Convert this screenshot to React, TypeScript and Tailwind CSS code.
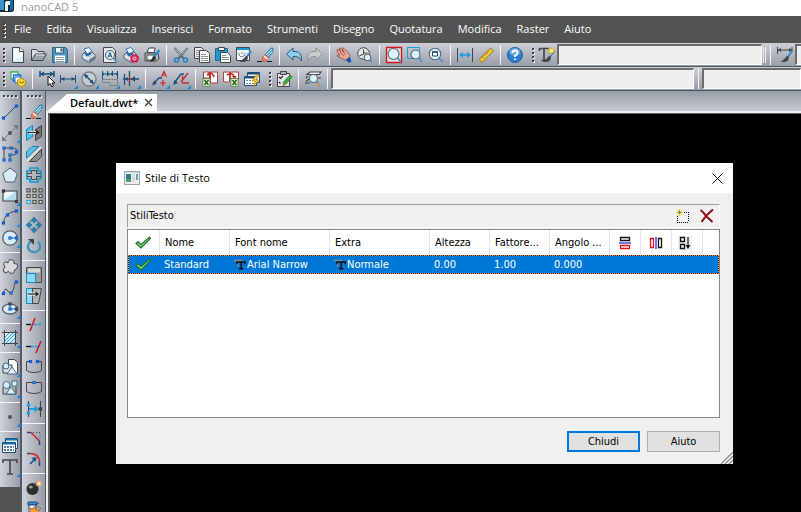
import { Fragment, type ReactNode } from "react";
import clsx from "clsx";

const INK = "#454545";
const NAVY = "#1d4f7c";
const CYAN = "#1a9fdc";
const RED = "#c8262c";

/* small shapes shared by several icons */
const Node = ({ x, y, c = "#0a5bd0" }: { x: number; y: number; c?: string }) => (
  <rect x={x - 1} y={y - 1} width="2" height="2" fill="#fff" stroke={c} strokeWidth="1.2" />
);

const Lens = ({ x = 7, y = 7, r = 4.5 }: { x?: number; y?: number; r?: number }) => (
  <>
    <path d={`M${x + r * 0.7} ${y + r * 0.7}L15 15`} stroke="#5b93c4" strokeWidth="2" />
    <circle cx={x} cy={y} r={r} fill="#d9f1fa" stroke="#5a656c" strokeWidth="1.1" />
  </>
);

const Brush = () => (
  <>
    <path d="M15 4L10 10" stroke="#1c78c4" strokeWidth="2.4" />
    <path d="M14 4.5L10 9" stroke="#d9edf8" strokeWidth=".8" />
    <path d="M10.500 9L7 12Q6 14 3.500 14.500Q8 16 11 13.500L12 10.500z" fill={INK} />
  </>
);

const Printer = () => (
  <>
    <path d="M3 2l5-1.500 3 4-5 2.500z" fill="#f4faff" stroke="#2a78c6" />
    <path d="M1 8l3-3 2 2.500 5-2.500 3 3v4l-6 3.500-7-4z" fill="#c9d0dc" stroke="#56647d" />
    <path d="M2 9l6 3 5.500-3.500" fill="none" stroke="#fff" />
    <path d="M8 12.500v3l6-3.500V8.500z" fill="#6a7a98" />
    <path d="M4 6l2 2.500 4-2" fill="none" stroke="#1b62b5" strokeWidth="1.500" />
  </>
);

const Dims = ({ y }: { y: number }) => (
  <>
    <path d={`M.5 ${y - 4}v8M15.500 ${y - 4}v8M1 ${y}h14`} stroke={NAVY} />
    <path d={`M1 ${y}l3.500-2v4zM15 ${y}l-3.500-2v4z`} fill={NAVY} />
  </>
);

const Excel = ({ x, y }: { x: number; y: number }) => (
  <>
    <rect x={x} y={y} width="7" height="8" fill="#e4f0dc" stroke="#4a7a34" strokeWidth=".7" />
    <path d={`M${x + 1.5} ${y + 1.5}l4 5M${x + 5.5} ${y + 1.5}l-4 5`} stroke="#2b6b10" strokeWidth="1.600" />
  </>
);

const Eraser = () => (
  <>
    <path d="M0 14.500h5M10 14.500h5" stroke="#111" strokeWidth="1.200" />
    <path d="M8 8l6-7h2v4l-5 6z" fill="#4aa9dc" stroke="#256e9c" strokeWidth=".7" />
    <path d="M9 8l6-6M10.500 9.500l5-5" stroke="#d6effa" strokeWidth=".9" />
    <path d="M5 11l3-3.500 3.500 3-3 4H6z" fill="#ee7c55" stroke="#a84a30" strokeWidth=".6" />
    <path d="M7 9l3.500 3" stroke="#fff" strokeWidth="1.200" />
  </>
);

const icons: Record<string, ReactNode> = {
  new: (
    <>
      <path d="M2.500.5h7.500l3.500 3.500v11.500h-11z" fill="#d9eefa" stroke={INK} />
      <path d="M4 2h5v4h4v3L4 13z" fill="#fff" opacity=".7" />
      <path d="M9.500.5v4h4" fill="#fff" stroke={INK} />
    </>
  ),
  open: (
    <>
      <path d="M.5 13.500v-11h5l1.500 2h6v3" fill="#d3dbe2" stroke={INK} />
      <path d="M.5 13.500l4-6.500h11l-3.500 6.500z" fill="#9ba4ae" stroke={INK} />
      <path d="M5 8h9" stroke="#e4e9ed" />
    </>
  ),
  save: (
    <>
      <path d="M.5.5h13l2 2v13h-15z" fill="#4d94b8" stroke="#2e6684" />
      <path d="M3.500.5h8v5.500h-8z" fill="#edf5f9" stroke="#2e6684" />
      <path d="M8.500 1.500h2v3h-2z" fill="#41545f" />
      <path d="M3 8.500h10v7H3z" fill="#fff" />
      <path d="M4 10.500h8M4 12.500h8M4 14.500h8" stroke="#8ba1ac" />
    </>
  ),
  print: <Printer />,
  preview: (
    <>
      <path d="M1.500.5h9l3 3v12h-12z" fill="#e6eaee" stroke={INK} />
      <Lens x={8} y={8} r={4.5} />
      <path d="M6 10.500L8 5.500l2 5M7 9h2" fill="none" stroke={NAVY} />
    </>
  ),
  printSetup: (
    <>
      <Printer />
      <circle cx="11.500" cy="11.500" r="3" fill="#f8c2d0" stroke="#cf204e" strokeWidth="1.800" />
      <circle cx="11.500" cy="11.500" r="4.300" fill="none" stroke="#cf204e" strokeDasharray="1.700 1.700" />
      <circle cx="11.500" cy="11.500" r="1" fill="#cf204e" />
    </>
  ),
  plotStyle: (
    <>
      <path d="M3 5l2-4h6l-1 5z" fill="#fff" stroke={INK} />
      <path d="M1 6h13l1 6-3 2H1z" fill="#b4bac2" stroke={INK} />
      <path d="M3 8h8v5H3z" fill="#f4f5f6" stroke={INK} />
      <path d="M15.500 3L9 11" stroke="#1f8bd1" strokeWidth="2.200" />
      <path d="M10 9l-3 4-1 2 3-1 3-3z" fill="#2a2a2a" />
    </>
  ),
  cut: (
    <>
      <path d="M1.500 1L11 12M14.500 1L5 12" stroke="#5c6872" strokeWidth="2" />
      <path d="M2 1.500l6 7M14 1.500L9 7" stroke="#e2edf3" strokeWidth=".7" />
      <circle cx="3.500" cy="13" r="2" fill="none" stroke="#2586bd" strokeWidth="1.600" />
      <circle cx="12.500" cy="13" r="2" fill="none" stroke="#2586bd" strokeWidth="1.600" />
    </>
  ),
  copy: (
    <>
      <path d="M.5.5h7l2 2v9h-9z" fill="#e8ecef" stroke={INK} />
      <path d="M2 3.500h5M2 5.500h4M2 7.500h3M2 9.500h3" stroke="#8a949c" />
      <path d="M5.500 3.500h7l3 3v9h-10z" fill="#fff" stroke={INK} />
      <path d="M7 7.500h5M7 9.500h7M7 11.500h7M7 13.500h7" stroke="#8a949c" />
    </>
  ),
  paste: (
    <>
      <path d="M.5 1.500h12v12H.5z" fill="#1c9ad4" stroke="#226c94" />
      <path d="M3.500.5h6v3h-6z" fill="#eef2f5" stroke={INK} />
      <path d="M5.500 5.500h7l3 3v7h-10z" fill="#fff" stroke={INK} />
      <path d="M7 8.500h4M7 10.500h7M7 12.500h7" stroke="#8a949c" />
    </>
  ),
  match: (
    <>
      <path d="M.5.500h13v13H.5z" fill="#f3f6f8" stroke={INK} />
      <path d="M1 2h12" stroke="#1c9ad4" strokeWidth="2" />
      <path d="M3 6v2l2 2 3-1 1-3M6 5v2" fill="none" stroke="#7b858d" />
      <Brush />
    </>
  ),
  eraser: <Eraser />,
  undo: (
    <path d="M.5 7L7 1v3.500h3Q16 5 15.500 14 13 9 9 9.500H7v3.500z" fill="#8dcdec" stroke="#285d7d" />
  ),
  redo: (
    <path d="M15.500 7L9 1v3.500H6Q0 5 .5 14 3 9 7 9.500h2v3.500z" fill="#c9ccd0" stroke="#8f9398" />
  ),
  hand: (
    <>
      <path
        d="M1 3q1-1 2 0l2 2-2-3q1-2 2-.5l3 3-2-3q1-1.500 2 0l4 4 2 3-1 4-3 1-4-2-5-2.500q0-1.500 2-1.200l1 .2-3-3.500z"
        fill="#e6a995"
        stroke="#8d4434"
        strokeWidth=".8"
      />
      <path d="M4 5l4 4M6 4l4 4" stroke="#8d4434" strokeWidth=".7" />
      <path d="M10 12l4-2 1.500 4.500-3 1.500z" fill="#1d4fb3" />
    </>
  ),
  zoomTime: (
    <>
      <circle cx="6.500" cy="6.500" r="5.800" fill="#dfe5e9" stroke={INK} />
      <path d="M6.500 2.500v5l-4 1M6.500 6h4" fill="none" stroke={INK} />
      <Lens x={10.5} y={10.5} r={3.3} />
    </>
  ),
  zoomAll: (
    <>
      <path d="M.5.5h15v15H.5z" fill="#dfe0e4" stroke="#d3131b" strokeWidth="1.300" />
      <Lens x={7.5} y={7} r={5.5} />
    </>
  ),
  zoomWindow: (
    <>
      <path d="M.5.5h12v11H.5z" fill="none" stroke={CYAN} />
      <Lens x={8.5} y={7.5} r={4.5} />
    </>
  ),
  zoomFit: (
    <>
      <Lens x={7} y={7} r={5.8} />
      <path d="M4.500 5h5v4h-5z" fill="#fff" stroke={NAVY} />
      <path d="M4 5h6" stroke={NAVY} strokeWidth="1.500" />
    </>
  ),
  distance: (
    <>
      <path d="M.5 1v14M15.500 1v14" stroke={INK} />
      <path d="M3 8h10" stroke={CYAN} strokeWidth="1.500" />
      <path d="M2 8l4-3v6zM14 8l-4-3v6z" fill={CYAN} />
    </>
  ),
  ruler: (
    <>
      <path d="M1 12.500L12.500 1l3 3L4 15.500z" fill="#f3c63b" stroke="#9a7414" />
      <path d="M4 9.500l1.500 1.500M6 7.500L7 8.500M8 5.500l1.500 1.500M10 3.500l1 1" stroke="#6b500b" />
    </>
  ),
  help: (
    <>
      <circle cx="8" cy="8" r="7.500" fill="#2a7fd4" stroke="#215c9c" />
      <ellipse cx="8" cy="5" rx="5.500" ry="4" fill="#84bdf0" opacity=".7" />
      <path d="M5.500 6q0-2.500 2.500-2.500T10.500 6Q10.500 7.500 8 8.500v1.500M8 11.500v1.600" fill="none" stroke="#fff" strokeWidth="1.800" />
    </>
  ),
  textStyle: (
    <>
      <path d="M0 1.500h10M.5 1v3M5 1.500V14M2.500 13.500H7" fill="none" stroke={INK} strokeWidth="1.700" />
      <Brush />
      <path d="M12.500 0v8M8.500 4h8M9.500 1l6 6M15.500 1l-6 6" stroke="#f39a1c" />
      <circle cx="12.500" cy="4" r="2" fill="#fff04a" />
    </>
  ),
  dimStyle: (
    <>
      <path d="M.5 0v7M15 0v5M1 3h14" stroke={INK} />
      <path d="M1 3l3-2v4zM15 3l-3-2v4z" fill={INK} />
      <Brush />
    </>
  ),
  layers: (
    <>
      <path d="M1 1h7v7H1z" fill="#fff" stroke="#3bb44a" strokeWidth="1.300" />
      <path d="M3.500 4h7v6h-7z" fill="#eef4ff" stroke="#1d66d6" strokeWidth="1.300" />
      <path d="M5 6h6v6H5z" fill="#fff" stroke="#1d66d6" />
      <path d="M7 10l4-3 5 3-1 4-4 2-3-2z" fill="#f7d637" stroke="#b78d14" />
      <path d="M9 11l3 1 2-1.500" fill="none" stroke="#8a6b10" />
    </>
  ),
  dimPick: (
    <>
      <path d="M1 0v6M15 0v6M1 3h14" stroke={NAVY} strokeWidth="1.500" />
      <path d="M1 3l4-2.500v5zM15 3l-4-2.500v5z" fill={NAVY} />
      <path d="M9 5v9.500l2.200-2 1.800 3.500 1.500-1-1.500-3h3z" fill="#fff" stroke="#111" />
    </>
  ),
  dimLinear: <Dims y={8} />,
  dimDiameter: (
    <>
      <circle cx="8" cy="8" r="7" fill="#c8ccd2" stroke="#7b7f84" strokeWidth="1.300" />
      <path d="M4 4l8 8" stroke={NAVY} strokeWidth="1.500" />
      <path d="M3 3l4.500 1.500L4.500 7.500zM13 13l-4.500-1.500 3-3z" fill={NAVY} />
    </>
  ),
  dimBase: (
    <>
      <path d="M.5 0v8M5.500 0v5M10.500 0v5M15.500 0v8M1 3h14" stroke={NAVY} />
      <path d="M0 3l2-1.500v3zM5 3l2-1.500v3zM11 3L9 1.500v3zM16 3l-2-1.500v3z" fill={NAVY} />
      <path d="M.5 8.500h15v6H8v-3H.5z" fill="none" stroke="#6d7176" strokeDasharray="2 1" />
    </>
  ),
  dimBreak: (
    <>
      <path d="M1.500 3v11M6.500 0v5M6.500 10v5M0 8h16" stroke={NAVY} strokeWidth="1.300" />
      <path d="M2 8l3-2v4zM8 8l4-3v6z" fill={NAVY} />
      <path d="M6.500 5v6" stroke={RED} strokeWidth="1.300" />
    </>
  ),
  leader: (
    <>
      <path d="M1 13l6-6h3" fill="none" stroke={NAVY} strokeWidth="1.400" />
      <path d="M0 14.500l2-5 3 3z" fill={NAVY} />
      <path d="M9.500 6L12 .5 14.500 6M10.500 4h3M8 12h6M11 9v6" fill="none" stroke={RED} strokeWidth="1.200" />
    </>
  ),
  leaderEdit: (
    <>
      <path d="M2 11l6-8h3" fill="none" stroke={NAVY} strokeWidth="1.400" />
      <path d="M0 14l1.500-5 3.500 3z" fill={NAVY} />
      <path d="M15 2L8 11M9.500 4.500v5M9 12h7" fill="none" stroke={RED} strokeWidth="1.300" />
    </>
  ),
  excelOut: (
    <>
      <path d="M1.500 1h6v6h-6zM8.500 1h7v11h-7z" fill="#fff" stroke="#b2423c" />
      <path d="M6 3q4-3 6 3" fill="none" stroke={RED} strokeWidth="1.600" />
      <path d="M4 4l4-3v4z" fill={RED} />
      <Excel x={1} y={7.5} />
    </>
  ),
  excelIn: (
    <>
      <path d="M.5 1h6v10h-6zM7.500 1h8v7h-8z" fill="#fff" stroke="#b2423c" />
      <path d="M4 4q5-3 7 1" fill="none" stroke={RED} strokeWidth="1.600" />
      <path d="M12 8L8.500 5h5z" fill={RED} />
      <Excel x={8} y={7.5} />
    </>
  ),
  tableFlash: (
    <>
      <path d="M3.500 1.500h12v10h-12z" fill="#eef5fa" stroke={NAVY} />
      <path d="M.5 5.500h12v9H.5z" fill="#fff" stroke={NAVY} />
      <path d="M1 6.500h11M4 2.500h11" stroke={NAVY} strokeWidth="1.800" />
      <path d="M2 9.500h9M2 12.500h9" stroke="#5b8cb0" strokeDasharray="2 1" />
      <path d="M12 4l-4 6h3l-2 6 6-7h-3l3-5z" fill="#ffc52e" stroke="#b9770b" strokeWidth=".6" />
    </>
  ),
  clipboard: (
    <>
      <path d="M1.500 2.500h12v13h-12z" fill="#e2e9ed" stroke={INK} />
      <path d="M4.500.5h6v3h-6z" fill="#aab2b8" stroke={INK} />
      <path d="M3 6l1.500 1.500L7 5M3 11l1.500 1.500" fill="none" stroke="#222" strokeWidth="1.200" />
      <path d="M14 4l2 2-6 7-3 1.500.5-3.500z" fill="#3dab3b" stroke="#216e20" strokeWidth=".7" />
      <path d="M7 14.500l.5-3 2 2z" fill="#e8663d" />
    </>
  ),
  layerSearch: (
    <>
      <path d="M2 3.500L5 1h11l-2 2.500zM1 7l2-2M1 10.500l3-2.500M0 12h5M12 7h4" fill="#eef1f3" stroke={INK} strokeWidth="1.200" />
      <Lens x={8.5} y={7.5} r={4} />
      <path d="M12.500 12.500l2 2" stroke="#ee8c36" strokeWidth="2" />
    </>
  ),
  line: (
    <>
      <path d="M2 14L14 2" stroke={NAVY} />
      <Node x={1.5} y={14} />
      <Node x={14.5} y={2} />
    </>
  ),
  ray: (
    <>
      <path d="M1 15L15 1" stroke="#77797c" />
      <path d="M0 16v-5l5 5zM16 0v5l-5-5z" fill="#77797c" />
      <Node x={8} y={8} c="#333" />
    </>
  ),
  polyline: (
    <>
      <path d="M2 14V2h8q5 0 5 3.500T10 9H8v5" fill="none" stroke={INK} />
      <Node x={2} y={2} />
      <Node x={9} y={2} />
      <Node x={2} y={14} />
      <Node x={8} y={14} />
      <Node x={8} y={9} />
      <Node x={14.5} y={6} />
    </>
  ),
  polygon: <path d="M8 1l7.300 5.500L12.500 15h-9L.7 6.500z" fill="#d5edf8" stroke="#53616b" />,
  rect: (
    <>
      <path d="M1 3h14v10H1z" fill="#b5def1" stroke={INK} strokeWidth="1.100" />
      <path d="M2 12V4h11z" fill="#eef9fd" />
      <Node x={1.5} y={3} c="#333" />
      <Node x={14.5} y={13.5} c="#333" />
    </>
  ),
  arc: (
    <>
      <path d="M1.500 14Q2 4 14 2" fill="none" stroke={INK} />
      <Node x={1.5} y={14} />
      <Node x={5.5} y={6} />
      <Node x={14.5} y={2} />
    </>
  ),
  circle: (
    <>
      <circle cx="8" cy="8" r="7.200" fill="#d5edf8" stroke="#53616b" strokeWidth="1.300" />
      <path d="M8 8h7" stroke="#0a5bd0" />
      <Node x={8} y={8} />
      <Node x={14.5} y={8} />
    </>
  ),
  cloud: (
    <path
      d="M3 8Q0 4 3.500 3 5 3 6 4 6 0 10 .8q3 1 2 4 4-1 3.500 3-1 3-3 3 0 4-4 3.500-2-1-2-2Q4 15 2 13q-2-3 1-5z"
      fill="#d6d8dc"
      stroke={INK}
    />
  ),
  spline: (
    <>
      <path d="M1.500 13Q3 7 5 10t4 3 3-6 2-5" fill="none" stroke={INK} />
      <Node x={1.5} y={13.5} />
      <Node x={9} y={13} />
      <Node x={14.5} y={2} />
    </>
  ),
  ellipse: (
    <>
      <ellipse cx="8" cy="8" rx="7.500" ry="5" fill="#d5edf8" stroke="#53616b" strokeWidth="1.300" />
      <path d="M8 3v5h7" fill="none" stroke="#0a5bd0" />
      <Node x={8} y={3} c="#333" />
      <Node x={8} y={8} />
      <Node x={14.5} y={8} c="#333" />
    </>
  ),
  hatch: (
    <>
      <path d="M3 3h10v10H3z" fill="#d8effa" />
      <path d="M3 7l4-4M3 11l8-8M4 13l9-9M8 13l5-5M11.500 13l1.500-1.500" stroke={CYAN} />
      <path d="M2.500 0v16M13.500 0v16M0 2.500h16M0 13.500h16" stroke={INK} />
    </>
  ),
  blockFile: (
    <>
      <path d="M6.500.5h6l3 3v11h-9z" fill="#fff" stroke={INK} />
      <path d="M1 6h9v8H1z" fill="#d2e3ec" stroke={INK} />
      <circle cx="4" cy="7" r="3" fill="#d5edf8" stroke="#3a6d8b" />
      <path d="M5 15l5-7 5 7z" fill="#e9eef1" stroke="#3a6d8b" />
    </>
  ),
  block: (
    <>
      <path d="M1 7h7M1 7v7h13V7" fill="none" stroke={INK} />
      <circle cx="4.500" cy="5" r="3.500" fill="#d5edf8" stroke="#3a6d8b" />
      <path d="M10 1h5v5h-5z" fill="#e1eef4" stroke="#3a6d8b" />
      <path d="M4 14l5-7 5 7z" fill="#e9eef1" stroke="#3a6d8b" />
    </>
  ),
  point: <Node x={8} y={8} c="#333" />,
  tables: (
    <>
      <path d="M3.500.500h12v10h-12z" fill="#eef5fa" stroke={NAVY} />
      <path d="M.5 4.500h13v10H.5z" fill="#fff" stroke={NAVY} />
      <path d="M1 5.500h12M4 1.500h11" stroke="#1c6ca5" strokeWidth="2.200" />
      <path d="M2 9h10M2 12h10" stroke={NAVY} strokeWidth="1.500" strokeDasharray="2 1" />
    </>
  ),
  text: <path d="M1 4V1h14v3M8 1v14M5 15h6" fill="none" stroke={INK} strokeWidth="1.600" />,
  mirror: (
    <>
      <path d="M.5 4.500l6-4v11l-6 4z" fill="#4cc1ee" stroke="#1c83b1" />
      <path d="M9.500 4.500l6-4v11l-6 4z" fill="#777" stroke="#444" />
      <path d="M3 7.500h9" stroke="#fff" strokeWidth="3" />
      <path d="M2 7.500h9" stroke="#222" strokeWidth="1.300" />
      <path d="M14 7.500L10 5v5z" fill="#222" />
    </>
  ),
  offset: (
    <>
      <path d="M.5 12V6l5.500-5.500h6.500z" fill="#59c4ee" stroke="#1c83b1" />
      <path d="M3.500 15.500l12-12v7l-5 5z" fill="#8b8d90" stroke="#444" />
      <path d="M1 15L15 1" stroke="#eee" strokeWidth="1.500" />
    </>
  ),
  contour: (
    <>
      <path d="M1 4h3V1h8v3h3v8h-3v3H4v-3H1z" fill="none" stroke="#159bd2" strokeWidth="1.700" />
      <path d="M1 6.500h4.500v-3h5v3H15M1 9.500h4.500v3h5v-3H15" fill="none" stroke="#454545" />
    </>
  ),
  array: (
    <>
      <path d="M1 .8h3v3H1zM7 .8h3v3H7zM13 .8h3v3h-3zM1 6.500h3v3H1zM7 6.500h3v3H7zM13 6.500h3v3h-3zM7 12.500h3v3H7zM13 12.500h3v3h-3z" fill="#e2e2e2" stroke="#4c4c4c" strokeWidth="1.200" />
      <path d="M1 12.500h3v3H1z" fill="#eafaff" stroke={CYAN} strokeWidth="1.200" />
    </>
  ),
  move: (
    <>
      <path d="M8 0l3.500 4h-7zM8 16l3.500-4h-7zM0 8l4-3.500v7zM16 8l-4-3.500v7z" fill="#2b84af" stroke="#225e7c" strokeWidth=".5" />
      <path d="M8 4v2M8 10v2M4 8h2M10 8h2" stroke="#2b84af" strokeWidth="2.500" />
    </>
  ),
  rotate: (
    <>
      <path d="M4.500 3.500Q0 8 3.500 12.500 8 16 12.500 12.500 16 8 12 3.500" fill="none" stroke="#3d92bb" strokeWidth="2.200" />
      <path d="M2 1h6v6z" fill="#3b3f43" />
    </>
  ),
  scale: (
    <>
      <path d="M.5.5h15v15H.5z" fill="#9a9da0" stroke="#474747" />
      <path d="M2 1.500h12v4H2z" fill="#d6d7d9" />
      <path d="M.5 6.500h9v9h-9z" fill="#8bd9f7" stroke="#168bc0" />
    </>
  ),
  stretch: (
    <>
      <path d="M.5.500h9v15h-9z" fill="#8fdaf6" stroke="#168bc0" />
      <path d="M6.500.5h9l-3 15h-6z" fill="#afb2b5" stroke="#474747" />
      <path d="M2 6h9" stroke="#fff" strokeWidth="3" />
      <path d="M2 6h9" stroke="#222" strokeWidth="1.300" />
      <path d="M13 6L9.500 3.500v5z" fill="#222" />
    </>
  ),
  trim: (
    <>
      <path d="M0 7.500h5" stroke="#111" strokeWidth="1.300" />
      <path d="M8 7.500h8" stroke={CYAN} strokeWidth="1.300" strokeDasharray="3 1" />
      <path d="M4 14L9 1" stroke="#d4131b" strokeWidth="1.500" />
    </>
  ),
  extend: (
    <>
      <path d="M0 8.500h5" stroke="#111" strokeWidth="1.300" />
      <path d="M5 8.500h7" stroke={CYAN} strokeWidth="1.300" strokeDasharray="3 1" />
      <path d="M10 15l5-12" stroke="#d4131b" strokeWidth="1.500" />
    </>
  ),
  breakTwo: (
    <>
      <path d="M4 2.500H.5v9Q3 13.500 8 13.500t7.500-2v-9H12" fill="none" stroke={INK} />
      <Node x={4.5} y={2.5} />
      <Node x={11.5} y={2.5} />
    </>
  ),
  breakOne: (
    <>
      <path d="M7 2.500H.5v9Q3 13.500 8 13.500t7.500-2v-9H9" fill="none" stroke={INK} />
      <Node x={8} y={2.5} />
    </>
  ),
  lengthen: (
    <>
      <path d="M2.500 0v16M14.500 0v16" stroke={INK} />
      <path d="M3 8h7" stroke={CYAN} strokeWidth="2" />
      <path d="M13 8L8.500 4.500v7z" fill={CYAN} />
      <Node x={2.5} y={4} c={CYAN} />
      <Node x={2.5} y={12} c={CYAN} />
      <Node x={14.5} y={8} c="#333" />
    </>
  ),
  chamfer: (
    <>
      <path d="M1 2.500h4M13.500 11v4" stroke="#174f81" strokeWidth="1.500" />
      <path d="M5 2.500l8.500 8.500" stroke={RED} strokeWidth="1.500" />
      <path d="M7 2.500h7v7" fill="none" stroke="#174f81" strokeDasharray="1 2" />
    </>
  ),
  fillet: (
    <>
      <path d="M1 2.500h3M13.500 11v4M4 13l5-5" stroke="#174f81" strokeWidth="1.500" />
      <path d="M4 2.500q9 0 9.500 8.500" fill="none" stroke={RED} strokeWidth="1.600" />
      <path d="M10.500 6l-1 5-4-4z" fill="#174f81" />
    </>
  ),
  bomb: (
    <>
      <circle cx="6.500" cy="9" r="6" fill="#2e2e2e" />
      <ellipse cx="4.800" cy="7" rx="2" ry="1.500" fill="#999" />
      <path d="M9 3.500l2.500 2" stroke="#555" strokeWidth="2.500" />
      <path d="M10 4l2-2" stroke="#222" />
      <circle cx="13" cy="3.500" r="3" fill="#f2a07e" />
      <circle cx="13" cy="3.500" r="1.500" fill="#fff3a2" />
    </>
  ),
  purge: (
    <>
      <path d="M2 1h9v3H2z" fill="#3c8fcf" stroke={NAVY} />
      <path d="M3 4h7v10H3z" fill="#eef4f8" stroke={NAVY} />
      <path d="M5 9l8-7M12 5l3 3" stroke="#444" strokeDasharray="2 1" />
      <path d="M4 7l3 1 2-2 1 3 4 0-3 3 3 3-4 0-2 1-3-1z" fill="#f5a52a" stroke="#d0461c" strokeWidth=".7" />
    </>
  ),
  check: <path d="M1 8.500l2-2L6 9.500 14.500 2l1 1.500L6 13z" fill="#7ce07c" stroke="#1f6b31" strokeWidth="1.100" />,
  addStyle: (
    <>
      <path d="M2 14.500h12M13.500 4v10M2.500 8v6M9 4.500h5" fill="none" stroke="#111" strokeDasharray="1 1" />
      <path d="M4.500 1v7M1 4.500h7M2 2l5 5M7 2L2 7" stroke="#d9cf2a" />
      <path d="M4.500 2.500v3M3 4.500h3" stroke="#777" />
    </>
  ),
  remove: <path d="M1.500 2q3 2 5.500 6l6.500 6M14 1.500Q8 6 2.500 14" fill="none" stroke="#8c0d10" strokeWidth="2" />,
  flipV: (
    <>
      <path d="M3.500 2.500h9v3h-9z" fill="none" stroke="#111" strokeWidth="1.300" />
      <path d="M2 8h12" stroke="#1717e0" strokeWidth="1.200" />
      <path d="M3.500 10.500h9v3h-9z" fill="none" stroke="#e81212" strokeWidth="1.300" />
    </>
  ),
  flipH: (
    <>
      <path d="M2.500 3.500h3v9h-3z" fill="none" stroke="#e81212" strokeWidth="1.300" />
      <path d="M8 2v12" stroke="#1717e0" strokeWidth="1.200" />
      <path d="M10.500 3.500h3v9h-3z" fill="none" stroke="#111" strokeWidth="1.300" />
    </>
  ),
  vertical: (
    <>
      <path d="M1 1h14v14H1z" fill="#f0f0f0" />
      <path d="M3.500 2.500h4v4h-4zM3.500 9.500h4v4h-4z" fill="none" stroke="#111" strokeWidth="1.300" />
      <path d="M11 2v11" stroke="#111" strokeWidth="1.200" />
      <path d="M8.500 10h5L11 14z" fill="#111" />
    </>
  ),
  font: (
    <>
      <path d="M0 2h11M5 2v8" fill="none" stroke="#8b8b8b" strokeWidth="2" />
      <path d="M4 7V4h11v3M9.500 4v9M6.500 13h6" fill="none" stroke="#111" strokeWidth="2" />
    </>
  ),
};

const Icon = ({ name, className = "size-4" }: { name: string; className?: string }) => (
  <svg viewBox="0 0 16 16" className={clsx("shrink-0 overflow-visible", className)} aria-hidden="true">
    {icons[name]}
  </svg>
);

type Tool = [name: string, label: string, menu?: boolean];

const ToolButton = ({ tool: [name, label, menu] }: { tool: Tool }) => (
  <button type="button" aria-label={label} className="relative flex size-[21px] shrink-0 items-center justify-center hover:bg-white/30">
    <Icon name={name} />
    {menu && <span className="absolute right-0 bottom-0 size-1 bg-[#1c86d8] [clip-path:polygon(100%_0,100%_100%,0_100%)]" />}
  </button>
);

/* groups of tools with an etched line between them */
const Tools = ({ groups, vertical }: { groups: Tool[][]; vertical?: boolean }) => (
  <>
    {groups.map((group, i) => (
      <Fragment key={i}>
        {i > 0 && <Separator vertical={vertical} />}
        {group.map((tool) => (
          <ToolButton key={tool[0]} tool={tool} />
        ))}
      </Fragment>
    ))}
  </>
);

const Separator = ({ vertical }: { vertical?: boolean }) => (
  <span className={clsx("flex shrink-0 items-center justify-center", vertical ? "h-2 w-full" : "h-full w-2")}>
    <span className={clsx("bg-[#f4f5f7]", vertical ? "h-px w-full" : "h-5 w-px")} />
  </span>
);

const Grip = ({ vertical }: { vertical?: boolean }) => (
  <span className={clsx("flex shrink-0 justify-center gap-0.5", vertical ? "h-2.5 w-full items-center" : "w-[7px] flex-col items-center")}>
    {[0, 1, 2, 3].map((n) => (
      <span key={n} className="size-0.5 bg-[#3c4148] shadow-[1px_1px_0_#eceef1]" />
    ))}
  </span>
);

const Field = ({ label, className }: { label: string; className: string }) => (
  <input
    aria-label={label}
    className={clsx("h-[21px] min-w-0 border-t-2 border-r border-b border-l-2 border-t-[#6b6b6b] border-r-white border-b-white border-l-[#6b6b6b] bg-[#efefef] px-1 text-[11px] outline-none", className)}
  />
);

const mainTools: Tool[][] = [
  [["new", "Nuovo"], ["open", "Apri"], ["save", "Salva"]],
  [["print", "Stampa"], ["preview", "Anteprima"], ["printSetup", "Imposta stampa"], ["plotStyle", "Stili di stampa"]],
  [["cut", "Taglia"], ["copy", "Copia"], ["paste", "Incolla"], ["match", "Copia proprietà"], ["eraser", "Cancella"]],
  [["undo", "Annulla"], ["redo", "Ripeti"]],
  [["hand", "Pan"], ["zoomTime", "Zoom dinamico"]],
  [["zoomAll", "Zoom tutto"], ["zoomWindow", "Zoom finestra"], ["zoomFit", "Zoom estensioni"]],
  [["distance", "Distanza"], ["ruler", "Misura"]],
  [["help", "Guida"]],
];

const dimTools: Tool[][] = [
  [["layers", "Layer"]],
  [["dimPick", "Quota"], ["dimLinear", "Quota lineare", true], ["dimDiameter", "Quota diametro", true], ["dimBase", "Quota linea base", true], ["dimBreak", "Interrompi quota", true]],
  [["leader", "Direttrice", true], ["leaderEdit", "Modifica direttrice", true]],
  [["excelOut", "Esporta in Excel"], ["excelIn", "Importa da Excel"], ["tableFlash", "Tabella rapida"]],
];

const drawTools: Tool[][] = [
  [["line", "Linea"], ["ray", "Raggio", true], ["polyline", "Polilinea"], ["polygon", "Poligono"], ["rect", "Rettangolo", true], ["arc", "Arco", true], ["circle", "Cerchio", true]],
  [["cloud", "Nuvola"], ["spline", "Spline"], ["ellipse", "Ellisse", true]],
  [["hatch", "Tratteggio", true]],
  [["blockFile", "Inserisci blocco", true], ["block", "Crea blocco", true]],
  [["point", "Punto", true]],
  [["tables", "Tabella"], ["text", "Testo", true]],
];

const editTools: Tool[][] = [
  [["eraser", "Cancella"], ["mirror", "Specchio"], ["offset", "Offset"], ["contour", "Contorno"], ["array", "Serie"]],
  [["move", "Sposta"], ["rotate", "Ruota"]],
  [["scale", "Scala"], ["stretch", "Stira"]],
  [["trim", "Taglia"], ["extend", "Estendi"], ["breakTwo", "Spezza"], ["breakOne", "Spezza in un punto"], ["lengthen", "Allunga"]],
  [["chamfer", "Cima"], ["fillet", "Raccorda"]],
  [["bomb", "Esplodi"], ["purge", "Elimina"]],
];

const menus = ["File", "Edita", "Visualizza", "Inserisci", "Formato", "Strumenti", "Disegno", "Quotatura", "Modifica", "Raster", "Aiuto"];

const barStyle = "flex h-6 shrink-0 items-center border-b border-[#4c5766] bg-linear-to-b from-[#cdd0d7] to-[#989fa9]";
const railStyle = "flex shrink-0 flex-col items-center bg-linear-to-r from-[#ced2d9] to-[#979da7]";

const StyleDialog = () => (
  <section
    role="dialog"
    aria-labelledby="dialog-title"
    className="absolute top-[163px] left-[116px] flex h-[301px] w-[617px] flex-col bg-[#f0f0f0] font-['DejaVu_Sans_Condensed','Noto_Sans',sans-serif] text-[11px] leading-4 text-black"
  >
    <header className="flex h-[30px] shrink-0 items-center bg-white px-2">
      <svg viewBox="0 0 16 14" className="h-3.5 w-4" aria-hidden="true">
        <path d="M.5.5h15v13H.5z" fill="#e9eef0" stroke="#9ba3a8" />
        <path d="M1 1.500h14" stroke="#cdd6da" />
        <path d="M2 3h5v8H2z" fill="#347c8a" />
        <path d="M2 8h5v3H2z" fill="#4da173" />
        <path d="M8 3h3v8H8z" fill="#d8dee0" />
        <path d="M12 3h2v6h-2z" fill="#6ea1b5" />
      </svg>
      <h1 id="dialog-title" className="ml-[5px] font-['Open_Sans','Noto_Sans',sans-serif] text-[11px]">Stile di Testo</h1>
      <button type="button" aria-label="Chiudi finestra" className="mr-0.5 ml-auto">
        <svg viewBox="0 0 11 11" className="size-[11px]" aria-hidden="true">
          <path d="M.5.5l10 10M10.500.5l-10 10" stroke="#111" />
        </svg>
      </button>
    </header>
    <div className="flex min-h-0 flex-1 flex-col pt-[11px] pr-[13px] pb-3 pl-[11px]">
      <div className="flex h-6 shrink-0 items-center border border-t-[#a0a0a0] border-r-white border-b-white border-l-[#a0a0a0] pr-1 pl-0.5">
        <span>StiliTesto</span>
        <button type="button" aria-label="Nuovo stile" className="ml-auto">
          <Icon name="addStyle" />
        </button>
        <button type="button" aria-label="Elimina stile" className="ml-2">
          <Icon name="remove" />
        </button>
      </div>
      <div className="mt-px min-h-0 flex-1 border border-[#828790] bg-white">
        <table className="w-full table-fixed border-separate border-spacing-0 text-left">
          <colgroup>
            <col className="w-8" />
            <col className="w-[70px]" />
            <col className="w-[100px]" />
            <col className="w-[100px]" />
            <col className="w-[60px]" />
            <col className="w-[60px]" />
            <col className="w-[60px]" />
            <col className="w-[31px]" />
            <col className="w-[31px]" />
            <col className="w-[31px]" />
            <col />
          </colgroup>
          <thead>
            <tr className="h-[25px] *:border-[#e5e5e5] *:p-0 *:pl-[5px] *:font-normal *:whitespace-nowrap [&>*:not(:last-child)]:border-r">
              <th aria-label="Corrente"><Icon name="check" className="ml-0.5 size-4" /></th>
              <th>Nome</th>
              <th>Font nome</th>
              <th>Extra</th>
              <th>Altezza</th>
              <th>Fattore...</th>
              <th>Angolo ...</th>
              <th aria-label="Capovolto"><Icon name="flipV" className="ml-0.5 size-4" /></th>
              <th aria-label="Riflesso"><Icon name="flipH" className="ml-0.5 size-4" /></th>
              <th aria-label="Verticale"><Icon name="vertical" /></th>
              <th />
            </tr>
          </thead>
          <tbody>
            <tr className="h-[19px] bg-[#0078d7] text-white shadow-[inset_0_0_0_1px_#10243a] outline-1 -outline-offset-1 outline-dotted outline-[#ff9a3c] *:p-0 *:pl-1">
              <td><Icon name="check" className="ml-[3px] size-4" /></td>
              <td>Standard</td>
              <td><span className="flex items-center gap-px"><Icon name="font" className="size-3" />Arial Narrow</span></td>
              <td><span className="flex items-center gap-px"><Icon name="font" className="size-3" />Normale</span></td>
              <td>0.00</td>
              <td>1.00</td>
              <td>0.000</td>
              <td colSpan={4} />
            </tr>
          </tbody>
        </table>
      </div>
      <footer className="mt-[13px] flex justify-end gap-[7px]">
        <button type="button" className="h-[21px] w-[73px] border-2 border-[#0078d7] bg-[#e1e1e1] leading-4">Chiudi</button>
        <button type="button" className="h-[21px] w-[73px] border border-[#adadad] bg-[#e1e1e1] leading-4">Aiuto</button>
      </footer>
    </div>
    <svg viewBox="0 0 12 12" className="absolute right-0 bottom-0 size-3" aria-hidden="true">
      <path d="M0 12L12 0M4 12l8-8M8 12l4-4" stroke="#8d8d8d" strokeWidth="1.300" />
      <path d="M2 12L12 2M6 12l6-6" stroke="#fff" />
    </svg>
  </section>
);

export default function App() {
  return (
    <main className="relative flex h-screen flex-col overflow-hidden bg-[#535353] font-['Open_Sans','Noto_Sans',sans-serif] text-[11px]">
      <header className="flex h-4 shrink-0 items-start bg-white">
        <svg viewBox="0 0 14 12" className="h-3 w-3.5" aria-hidden="true">
          <path d="M0 0h14v9q0 3-3 3H0z" fill="#1d2731" />
          <path d="M0 0h4v10H0z" fill="#3596cf" />
          <path d="M5 11V3q0-2 2-2h3v4H8v6z" fill="#e8f3fa" />
          <path d="M10 0h3v8q0 3-3 3z" fill="#0f6cab" />
        </svg>
        <span className="ml-[7px] leading-[14px] text-[#999]">nanoCAD 5</span>
      </header>

      <nav className="flex h-[27px] shrink-0 items-center text-white">
        <Grip />
        <div className="flex gap-[15px] pl-[7px]">
          {menus.map((menu) => (
            <a key={menu} href="#" className="hover:underline">{menu}</a>
          ))}
        </div>
      </nav>

      <div className={barStyle}>
        <Grip />
        <Tools groups={mainTools} />
        <span className="w-1 shrink-0" />
        <Grip />
        <ToolButton tool={["textStyle", "Stile di testo"]} />
        <Field label="Stile di testo corrente" className="w-[205px] shrink-0" />
        <span className="ml-px h-4 w-[3px] shrink-0 border-x border-[#eceef1]" />
        <Separator />
        <ToolButton tool={["dimStyle", "Stile di quota"]} />
        <Field label="Stile di quota corrente" className="w-0 flex-1" />
      </div>

      <div className={barStyle}>
        <Grip />
        <Tools groups={dimTools} />
        <span className="w-1 shrink-0" />
        <Grip />
        <Tools groups={[[["clipboard", "Appunti"]], [["layerSearch", "Cerca layer"]]]} />
        <Separator />
        <Field label="Layer corrente" className="flex-1" />
        <Separator />
        <Field label="Colore" className="w-[99px]" />
      </div>

      <div className="flex min-h-0 flex-1">
        <aside className="w-5 shrink-0">
          <div className={clsx(railStyle, "pb-2.5")}>
            <Grip vertical />
            <Tools groups={drawTools} vertical />
          </div>
        </aside>
        <aside className={clsx(railStyle, "w-[26px] overflow-hidden border-r border-l-2 border-[#535a66]")}>
          <Grip vertical />
          <Tools groups={editTools} vertical />
        </aside>
        <div className="flex min-w-0 flex-1 flex-col">
          <div className="flex h-5 shrink-0 items-end bg-linear-to-b from-[#969ca7] to-[#c8ccd3] pl-0.5">
            <div className="flex h-[17px] items-center bg-white pr-1 pl-[22px] text-black [clip-path:polygon(19px_0,100%_0,100%_100%,0_100%)]">
              <span className="leading-4 font-semibold">Default.dwt*</span>
              <button type="button" aria-label="Chiudi disegno" className="ml-1.5">
                <svg viewBox="0 0 9 9" className="size-[9px]" aria-hidden="true">
                  <path d="M1 1l7 7M8 1L1 8" stroke="#444" strokeWidth="1.300" />
                </svg>
              </button>
            </div>
          </div>
          <div className="flex-1 border-t-2 border-l-2 border-[#eceef0] bg-[#c5c8cd]">
            <div className="h-full border-t border-l-2 border-[#5b5f66] bg-black" />
          </div>
        </div>
      </div>

      <StyleDialog />
    </main>
  );
}
